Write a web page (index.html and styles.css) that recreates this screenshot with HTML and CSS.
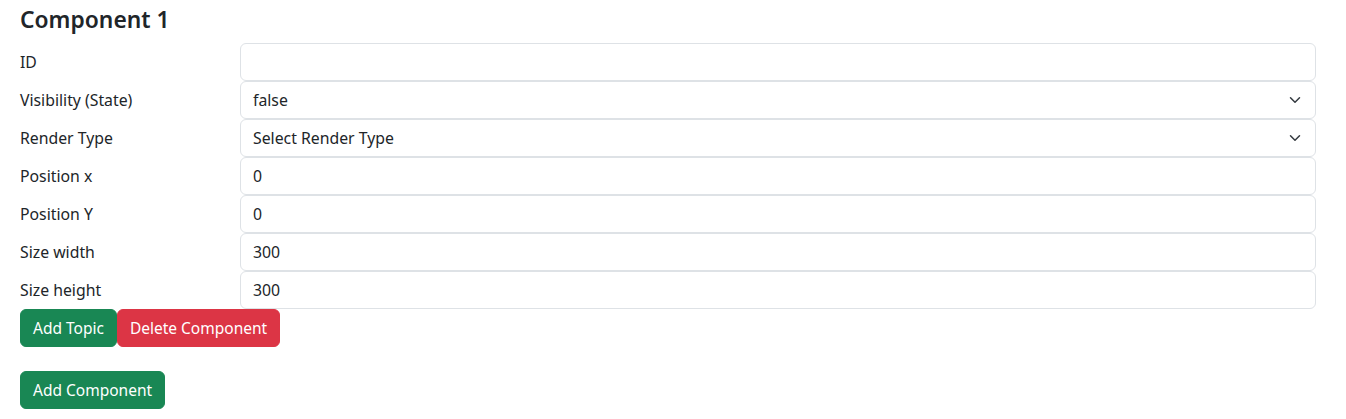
FILE: index.html
```html
<!DOCTYPE html>
<html lang="en">
<head>
<meta charset="utf-8">
<title>Components</title>
<link rel="stylesheet" href="styles.css">
</head>
<body>
<div class="page">
  <section class="component">
    <h4 class="title">Component 1</h4>
    <div class="form">
      <label class="label">ID</label>
      <input class="control" type="text" value="">
      <label class="label">Visibility (State)</label>
      <div class="control select"><span>false</span><svg class="chev" viewBox="0 0 16 16" width="16" height="12"><path fill="none" stroke="#343a40" stroke-linecap="round" stroke-linejoin="round" stroke-width="2" d="m2 5 6 6 6-6"/></svg></div>
      <label class="label">Render Type</label>
      <div class="control select"><span>Select Render Type</span><svg class="chev" viewBox="0 0 16 16" width="16" height="12"><path fill="none" stroke="#343a40" stroke-linecap="round" stroke-linejoin="round" stroke-width="2" d="m2 5 6 6 6-6"/></svg></div>
      <label class="label">Position x</label>
      <input class="control" type="text" value="0">
      <label class="label">Position Y</label>
      <input class="control" type="text" value="0">
      <label class="label">Size width</label>
      <input class="control" type="text" value="300">
      <label class="label">Size height</label>
      <input class="control" type="text" value="300">
    </div>
    <div class="actions">
      <button class="btn btn-green">Add Topic</button>
      <button class="btn btn-red">Delete Component</button>
    </div>
  </section>
  <div class="footer">
    <button class="btn btn-green">Add Component</button>
  </div>
</div>
</body>
</html>
```
FILE: styles.css
```css
* { box-sizing: border-box; }
html, body { margin: 0; padding: 0; background: #fff; }
body {
  font-family: "Noto Sans", "Open Sans", sans-serif;
  font-size: 16px;
  line-height: 24px;
  color: #212529;
}
.page { padding: 5px 30px 0 20px; }
.title {
  margin: 0 0 9px 0;
  font-size: 22.8px;
  font-weight: 600;
  line-height: 29px;
}
.form {
  display: grid;
  grid-template-columns: 220px 1fr;
  row-gap: 0;
}
.label {
  display: flex;
  align-items: center;
  height: 38px;
  font-size: 15.8px;
}
.control {
  display: flex;
  align-items: center;
  justify-content: space-between;
  width: 100%;
  height: 38px;
  padding: 6px 12px;
  border: 1px solid #dee2e6;
  border-radius: 6px;
  font-family: inherit;
  font-size: 15.8px;
  color: #212529;
  background: #fff;
  outline: none;
}
.chev { flex: none; }
.actions { display: flex; }
.footer { margin-top: 24px; }
.btn {
  height: 38px;
  padding: 6px 12px;
  border: 1px solid transparent;
  border-radius: 6px;
  font-family: inherit;
  font-size: 15.5px;
  line-height: 24px;
  color: #fff;
  cursor: pointer;
}
.btn-green { background: #198754; border-color: #198754; }
.btn-red { background: #dc3545; border-color: #dc3545; }
```
